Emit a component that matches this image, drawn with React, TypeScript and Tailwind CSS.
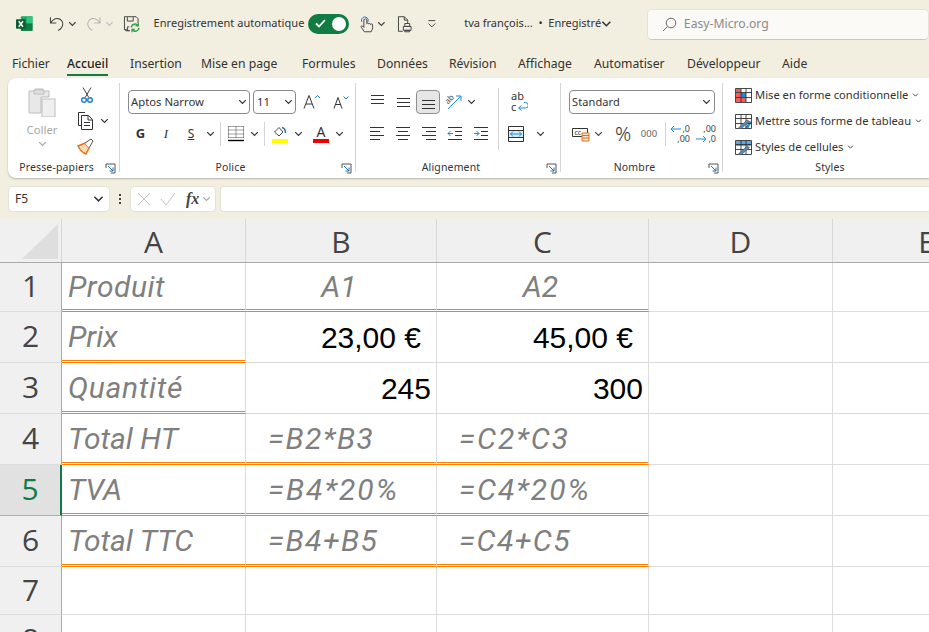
import type { ReactNode } from "react";

const ui = "font-['Noto_Sans',sans-serif]";

function Chev({ className = "" }: { className?: string }) {
  return (
    <svg width="9" height="6" viewBox="0 0 9 6" className={className} fill="none" stroke="currentColor" strokeWidth="1.2">
      <path d="M1.2 1.2 4.5 4.5 7.8 1.2" />
    </svg>
  );
}

function Launcher() {
  return (
    <svg width="11" height="11" viewBox="0 0 11 11" fill="none" stroke="#555" strokeWidth="1">
      <path d="M1 5V1h9v9H6" />
      <path d="M3 3l5 5M8 4.5V8H4.5" stroke="#1f6fb5" />
    </svg>
  );
}

function Lines({ ys, xs }: { ys: number[]; xs: [number, number][] }) {
  return (
    <svg width="16" height="16" viewBox="0 0 16 16" stroke="#333" strokeWidth="1" fill="none">
      {ys.map((y, i) => (
        <path key={y} d={`M${xs[i][0]} ${y + 0.5}H${xs[i][1]}`} />
      ))}
    </svg>
  );
}

function Indent({ dir }: { dir: "l" | "r" }) {
  return (
    <svg width="16" height="16" viewBox="0 0 16 16" fill="none" stroke="#333">
      <path d="M1 1.5h14M8 5.5h7M8 9.5h7M1 13.5h14" />
      <path d={dir === "l" ? "M6 7.5H1M3.5 5 1 7.5 3.5 10" : "M1 7.5h5M3.5 5 6 7.5 3.5 10"} stroke="#1f8ad6" />
    </svg>
  );
}

function Sep({ className }: { className: string }) {
  return <div className={`w-px bg-[#d5d5d5] ${className}`} />;
}

function Group({ label, className, launcher = true, children }: { label: string; className: string; launcher?: boolean; children: ReactNode }) {
  return (
    <div className={`flex h-[89px] shrink-0 flex-col ${className}`}>
      <div className="flex-1">{children}</div>
      <div className="-mb-[6px] grid h-[20px] grid-cols-[1fr_14px] items-center text-[10.5px] tracking-[0.15px] text-[#333]">
        <span className="whitespace-nowrap text-center">{label}</span>
        {launcher ? <Launcher /> : <span />}
      </div>
    </div>
  );
}

function TitleBar() {
  return (
    <div className="flex h-[47px] items-center text-[#333]">
      <svg width="17" height="17" viewBox="0 0 17 17" className="ml-[16px]">
        <rect x="5" y="1" width="12" height="15" rx="1" fill="#21a366" />
        <rect x="11" y="1" width="6" height="7.5" fill="#33c481" />
        <rect x="5" y="8.5" width="12" height="7.5" fill="#107c41" />
        <rect x="0" y="4" width="10" height="10" rx="1" fill="#0b5e33" />
        <path d="M2.8 6.2 7.2 11.8M7.2 6.2 2.8 11.8" stroke="#fff" strokeWidth="1.5" />
      </svg>
      <svg width="17" height="17" viewBox="0 0 17 17" fill="none" stroke="#444" strokeWidth="1.1" className="ml-[16px]">
        <path d="M1.5 2v6h6M1.8 7.8C4 4.5 6.5 3 9.5 3.5c3.5.6 5.5 4 4.5 7.2-.6 2-2.2 3.8-4.5 5" />
      </svg>
      <Chev className="ml-[3px] text-[#444]" />
      <svg width="17" height="17" viewBox="0 0 17 17" fill="none" stroke="#b5b5b5" strokeWidth="1.1" className="ml-[8px]">
        <path d="M15.5 2v6h-6M15.2 7.8C13 4.5 10.5 3 7.5 3.5 4 4.1 2 7.5 3 10.7c.6 2 2.2 3.8 4.5 5" />
      </svg>
      <Chev className="ml-[4px] text-[#c4c4c4]" />
      <svg width="18" height="18" viewBox="0 0 18 18" fill="none" className="ml-[9px]">
        <path d="M1.5 1.5h12l2 2v4.5M7 16H3l-1.5-1.5z M1.5 1.5V15" stroke="#444" />
        <path d="M4.5 2v4h6V2M4.5 16v-4h2" stroke="#444" />
        <path d="M8.5 12.5a4 4 0 0 1 7-2M16.5 13a4 4 0 0 1-7 2" stroke="#2a9d4a" strokeWidth="1.4" />
        <path d="M15.8 8v3h-3M9.2 17.5v-3h3" stroke="#2a9d4a" strokeWidth="1.2" />
      </svg>
      <span className="ml-[13px] w-[148px] whitespace-nowrap text-[11px] tracking-[0.05px]">Enregistrement automatique</span>
      <div className="ml-[6px] flex h-[20px] w-[42px] items-center justify-between rounded-full bg-[#107c41] pl-[7px] pr-[3px]">
        <svg width="11" height="9" viewBox="0 0 11 9" fill="none" stroke="#fff" strokeWidth="1.8">
          <path d="M1 4.5 4 7.5 10 1" />
        </svg>
        <span className="size-[14px] rounded-full bg-white" />
      </div>
      <svg width="16" height="18" viewBox="0 0 16 18" fill="none" className="ml-[10px]">
        <path d="M3 7a3.5 3.5 0 1 1 6 0" stroke="#1f7ad6" />
        <path d="M5 4.5v8L3.5 11c-1-.6-1.8.4-1.2 1.2L5.5 17h7c1-1.5 1.5-3 1.5-4.5V10c0-1.200-1.500-1.500-2-.5 0-1.200-1.500-1.500-2-.5 0-1-1.500-1.300-2-.3V4.500c0-1.200-2.500-1.200-2.500 0z" stroke="#444" />
      </svg>
      <Chev className="ml-[3px] text-[#444]" />
      <svg width="16" height="18" viewBox="0 0 16 18" fill="none" stroke="#444" className="ml-[11px]">
        <path d="M6 16.500H1.500v-15h6l3.500 3.500v3M7.500 1.500V5H11" />
        <path d="M8 8.500h5v3H8zM6.500 11.500h8v4h-8zM8 15.500h5V17H8z" />
      </svg>
      <svg width="10" height="10" viewBox="0 0 10 10" fill="none" stroke="#444" className="ml-[15px]">
        <path d="M1.500 1.500h7M1.500 4.500 5 8l3.500-3.500" />
      </svg>
      <span className="ml-[27px] w-[142px] whitespace-nowrap text-[11px]">tva françois... &nbsp;•&nbsp; Enregistré</span>
      <Chev className="scale-125 text-[#333]" />
      <div className="ml-[36px] mt-[9px] flex h-[31px] w-[290px] items-center self-start rounded-[5px] border border-[#e4e2da] border-b-[#c9c7bf] bg-[#fbfaf7] pl-[14px] text-[12.2px] text-[#8a8a8a]">
        <svg width="15" height="15" viewBox="0 0 15 15" fill="none" stroke="#666" className="mr-[7px]">
          <circle cx="9" cy="6" r="4.800" />
          <path d="M5.500 9.500 1 14" />
        </svg>
        Easy-Micro.org
      </div>
    </div>
  );
}

function Tabs() {
  return (
    <div className="flex h-[31px] items-start pt-[8px] text-[12.2px] text-[#333]">
      <span className="ml-[12px] w-[55px]">Fichier</span>
      <span className="flex w-[63px] flex-col items-start">
        <span className="border-b-[2px] border-[#107c41] pb-[1px] font-medium text-[#1f1f1f]">Accueil</span>
      </span>
      <span className="w-[71px]">Insertion</span>
      <span className="w-[101px]">Mise en page</span>
      <span className="w-[75px]">Formules</span>
      <span className="w-[72px]">Données</span>
      <span className="w-[69px]">Révision</span>
      <span className="w-[76px]">Affichage</span>
      <span className="w-[93px]">Automatiser</span>
      <span className="w-[95px]">Développeur</span>
      <span>Aide</span>
    </div>
  );
}

function Clipboard() {
  return (
    <Group label="Presse-papiers" className="w-[112px] border-r border-[#d5d5d5]">
      <div className="flex pt-[4px]">
        <div className="ml-[17px] flex w-[34px] flex-col items-center text-[#a8a8a8]">
          <svg width="28" height="30" viewBox="0 0 28 30" fill="none" stroke="#bdbdbd">
            <path d="M1 4h6V2h8v2h6v6H13v16H1z" fill="#e8e8e8" />
            <rect x="14" y="12" width="13" height="18" fill="#efefef" />
            <path d="M6 3h10v4H6z" fill="#e0e0e0" />
          </svg>
          <span className="mt-[4px] text-[11.3px] leading-[17px]">Coller</span>
          <Chev className="mt-[3px]" />
        </div>
        <div className="ml-[18px] flex flex-col">
          <svg width="16" height="17" viewBox="0 0 16 17" fill="none" className="ml-[2px]">
            <path d="M4 0.500 9.500 10M12 0.500 6.500 10" stroke="#444" />
            <circle cx="5" cy="13" r="2.300" stroke="#1f7ad6" strokeWidth="1.400" />
            <circle cx="11" cy="13" r="2.300" stroke="#1f7ad6" strokeWidth="1.400" />
          </svg>
          <div className="mt-[8px] flex h-[18px] items-center">
            <svg width="18" height="18" viewBox="0 0 18 18" fill="none" stroke="#333">
              <path d="M5 13.500H1.500v-13H8" />
              <path d="M4.500 3.500h7l4 4v10h-11zM11 3.500V8h4.500M7 10.500h6M7 13.500h6" />
            </svg>
            <Chev className="ml-[5px] text-[#333]" />
          </div>
          <svg width="18" height="17" viewBox="0 0 18 17" className="mt-[8px]" fill="none">
            <path d="M1 8l7-3 4 5-3 6C6 15 3 12 1 8z" fill="#f8d9b8" stroke="#e0701a" strokeWidth="1.400" />
            <path d="M8 5l6-4 2 2-4 7" fill="#fff" stroke="#555" />
          </svg>
        </div>
      </div>
    </Group>
  );
}

function Font() {
  return (
    <Group label="Police" className="w-[236px] border-r border-[#d5d5d5]">
      <div className="flex items-center gap-[3px] pl-[8px] pt-[7px]">
        <div className="flex h-[24px] w-[122px] items-center justify-between rounded-[4px] border border-[#8a8a8a] pl-[2px] pr-[2px] text-[11.3px] text-[#333]">
          Aptos Narrow
          <Chev />
        </div>
        <div className="flex h-[24px] w-[43px] items-center justify-between rounded-[4px] border border-[#8a8a8a] pl-[3px] pr-[2px] text-[11.3px] text-[#333]">
          11
          <Chev />
        </div>
        <svg width="18" height="16" viewBox="0 0 18 16" fill="none" stroke="#333" className="ml-[4px]">
          <path d="M1 14.500 6 1.500l5 13M3 10h6" />
          <path d="M12 4l2.500-2.500L17 4" stroke="#1f7ad6" />
        </svg>
        <svg width="16" height="14" viewBox="0 0 16 14" fill="none" stroke="#333" className="ml-[9px]">
          <path d="M1 13.500 5 2.500l4 11M2.500 9.500h5" />
          <path d="M10.500 1.500 13 4l2.500-2.500" stroke="#1f7ad6" />
        </svg>
      </div>
      <div className="mt-[9px] flex h-[22px] items-center pl-[8px] text-[#333]">
        <span className="w-[25px] text-center text-[13px] font-bold">G</span>
        <span className="w-[26px] text-center font-['Liberation_Serif',serif] text-[13px] italic">I</span>
        <span className="w-[24px] text-center text-[12px] underline">S</span>
        <span className="flex w-[14px] justify-center"><Chev /></span>
        <Sep className="ml-[3px] mr-[3px] h-[24px]" />
        <span className="flex w-[23px] justify-center">
          <svg width="16" height="16" viewBox="0 0 16 16" fill="none" stroke="#444">
            <path d="M.500.500h15M.500 4h15M.500 8h15M.500 11.500h15M.500.500v12M8 .500v12M15.500.500v12" strokeDasharray="1 1" />
            <path d="M0 14.500h16" stroke="#000" strokeWidth="1.400" />
          </svg>
        </span>
        <span className="flex w-[14px] justify-center"><Chev /></span>
        <Sep className="ml-[3px] mr-[3px] h-[24px]" />
        <span className="flex w-[24px] flex-col items-center">
          <svg width="14" height="12" viewBox="0 0 14 12" fill="none" stroke="#444">
            <path d="M1.500 6 6 1.500 10 6l-4 4z" />
            <path d="M9 1.500c2 .5 3.500 2.500 3.500 5.500" stroke="#1f6fb5" strokeWidth="1.400" />
          </svg>
          <span className="mt-px h-[4px] w-[16px] bg-[#ffff00]" />
        </span>
        <span className="flex w-[12px] justify-center"><Chev /></span>
        <span className="ml-[5px] flex w-[24px] flex-col items-center">
          <span className="text-[14px] leading-[14px]">A</span>
          <span className="h-[4px] w-[16px] bg-[#ee0000]" />
        </span>
        <span className="flex w-[12px] justify-center"><Chev /></span>
      </div>
    </Group>
  );
}

function Alignment() {
  const top: [number, number][] = [[2, 15], [2, 15], [2, 15]];
  return (
    <Group label="Alignement" className="w-[205px] border-r border-[#d5d5d5]">
      <div className="flex">
        <div className="w-[142px] pl-[8px] pt-[7px]">
          <div className="flex h-[24px] items-center">
            <span className="flex w-[26px] justify-center"><Lines ys={[1, 5, 9]} xs={top} /></span>
            <span className="flex w-[26px] justify-center"><Lines ys={[4, 8, 12]} xs={top} /></span>
            <span className="flex h-[24px] w-[24px] items-center justify-center rounded-[4px] border border-[#8f8f8f] bg-[#e6e6e6]"><Lines ys={[6, 10, 14]} xs={top} /></span>
            <span className="ml-[1px] flex w-[26px] justify-center">
              <svg width="18" height="18" viewBox="0 0 18 18" fill="none">
                <path d="M3 16 16 3M11 3h5v5" stroke="#1f8ad6" />
                <text x="1" y="9" fontSize="8" fill="#444" transform="rotate(-45 5 8)">ab</text>
              </svg>
            </span>
            <Chev className="text-[#333]" />
          </div>
          <div className="mt-[9px] flex h-[22px] items-center">
            <span className="flex w-[26px] justify-center"><Lines ys={[1, 5, 9, 13]} xs={[[1, 15], [1, 11], [1, 15], [1, 11]]} /></span>
            <span className="flex w-[26px] justify-center"><Lines ys={[1, 5, 9, 13]} xs={[[1, 15], [3, 13], [1, 15], [3, 13]]} /></span>
            <span className="flex w-[26px] justify-center"><Lines ys={[1, 5, 9, 13]} xs={[[1, 15], [5, 15], [1, 15], [5, 15]]} /></span>
            <span className="flex w-[26px] justify-center"><Indent dir="l" /></span>
            <span className="flex w-[26px] justify-center"><Indent dir="r" /></span>
          </div>
        </div>
        <Sep className="mt-[5px] h-[62px]" />
        <div className="flex w-[61px] flex-col pl-[9px] pt-[7px]">
          <div className="flex h-[24px] w-[24px] flex-col items-start text-[11px] leading-[11px] text-[#333]">
            <span className="pl-[3px]">ab</span>
            <span className="flex items-center pl-[3px]">c
              <svg width="11" height="9" viewBox="0 0 11 9" fill="none" stroke="#1f8ad6" className="ml-[1px]">
                <path d="M7 .500h1.500a2.500 2.500 0 0 1 0 5.500H2M4.500 3.500 1.500 6l3 2.500" />
              </svg>
            </span>
          </div>
          <div className="mt-[9px] flex h-[22px] items-center">
            <svg width="16" height="16" viewBox="0 0 16 16" fill="none" stroke="#333">
              <path d="M.500.500h15v15H.500zM.500 4.500h15M.500 11.500h15" />
              <rect x="1" y="5" width="14" height="6" fill="#d8ecfa" stroke="none" />
              <path d="M2.500 8h11M5 5.500 2.500 8 5 10.500M11 5.500 13.500 8 11 10.500" stroke="#1f8ad6" />
            </svg>
            <Chev className="ml-[12px] text-[#333]" />
          </div>
        </div>
      </div>
    </Group>
  );
}

function NumberGroup() {
  return (
    <Group label="Nombre" className="w-[162px] border-r border-[#d5d5d5]">
      <div className="pl-[8px] pt-[7px]">
        <div className="flex h-[24px] w-[146px] items-center justify-between rounded-[4px] border border-[#8a8a8a] pl-[2px] pr-[3px] text-[11px] tracking-[0.1px] text-[#333]">
          Standard
          <Chev />
        </div>
        <div className="mt-[9px] flex h-[22px] items-center text-[#444]">
          <svg width="20" height="16" viewBox="0 0 20 16" fill="none" className="ml-[3px]">
            <path d="M.500 2.500h15v8H.500z" stroke="#333" />
            <text x="2.500" y="9" fontSize="7" fill="#333">cc</text>
            <path d="M10 7h7v8h-7z" fill="#fbe3cf" stroke="#e0701a" />
            <path d="M10 9.500h7M10 12h7" stroke="#e0701a" />
          </svg>
          <Chev className="ml-[2px]" />
          <span className="ml-[10px] w-[20px] text-center text-[20px] font-light leading-[20px] text-[#333]">%</span>
          <span className="ml-[4px] w-[24px] text-center text-[9.500px] text-[#666]">000</span>
          <Sep className="ml-[4px] h-[24px]" />
          <span className="ml-[6px] flex w-[18px] flex-col items-end text-[9px] leading-[10px]">
            <span className="flex items-center">
              <svg width="11" height="8" viewBox="0 0 11 8" fill="none" stroke="#1f8ad6" className="mr-px"><path d="M11 4H1M4 1 1 4l3 3" /></svg>
              ,0
            </span>
            <span>,00</span>
          </span>
          <span className="ml-[8px] flex w-[18px] flex-col items-end text-[9px] leading-[10px]">
            <span>,00</span>
            <span className="flex items-center">
              <svg width="11" height="8" viewBox="0 0 11 8" fill="none" stroke="#1f8ad6" className="mr-px"><path d="M0 4h10M7 1l3 3-3 3" /></svg>
              ,0
            </span>
          </span>
        </div>
      </div>
    </Group>
  );
}

function StyleIcon({ kind }: { kind: "cond" | "table" | "cell" }) {
  return (
    <svg width="17" height="15" viewBox="0 0 17 15" fill="none" className="shrink-0">
      {kind === "cond" && (
        <>
          <rect x="1" y="1" width="5" height="3" fill="#f25c5c" />
          <rect x="6" y="5" width="5" height="4" fill="#1f8ad6" />
          <rect x="1" y="5" width="5" height="9" fill="#f25c5c" />
          <rect x="6" y="10" width="5" height="4" fill="#f25c5c" />
        </>
      )}
      {kind === "table" && <path d="M10 14l5-7 1.500 1-3 6z" fill="#1f8ad6" />}
      {kind === "cell" && <rect x="1" y="1" width="15" height="5" fill="#5aa9e6" />}
      <path d="M.500.500h16v14H.500zM.500 4.500h16M.500 9.500h16M6 .500v14M11 .500v14" stroke="#333" strokeWidth="0.900" />
      {kind !== "cond" && <path d="M3 14.500 12 6l2.500 1.500-8 7z" fill="#4d90c4" stroke="#555" strokeWidth="0.700" />}
    </svg>
  );
}

function Styles() {
  const items: { label: string; kind: "cond" | "table" | "cell" }[] = [
    { label: "Mise en forme conditionnelle", kind: "cond" },
    { label: "Mettre sous forme de tableau", kind: "table" },
    { label: "Styles de cellules", kind: "cell" },
  ];
  return (
    <Group label="Styles" className="w-[228px]" launcher={false}>
      <div className="flex flex-col gap-[6px] pl-[12px] pt-[2px]">
        {items.map((s) => (
          <div key={s.label} className="flex h-[20px] items-center gap-[3px] whitespace-nowrap text-[11.2px] text-[#333]">
            <StyleIcon kind={s.kind} />
            <span>{s.label}</span>
            <Chev className="scale-75" />
          </div>
        ))}
      </div>
    </Group>
  );
}

function FormulaBar() {
  return (
    <div className="mt-[8px] flex h-[26px] items-stretch pl-[8px] text-[#333]">
      <div className="flex w-[102px] items-center justify-between rounded-[4px] border border-[#e3e1d8] bg-white pl-[6px] pr-[6px] text-[12px]">
        F5
        <Chev className="scale-125" />
      </div>
      <div className="flex w-[20px] flex-col items-center justify-center gap-[2px]">
        <span className="size-[2px] bg-[#444]" />
        <span className="size-[2px] bg-[#444]" />
        <span className="size-[2px] bg-[#444]" />
      </div>
      <div className="flex w-[86px] items-center rounded-[4px] border border-[#e3e1d8] bg-white pl-[6px] text-[#c4c4c4]">
        <svg width="14" height="14" viewBox="0 0 14 14" fill="none" stroke="currentColor"><path d="M1 1l12 12M13 1 1 13" /></svg>
        <svg width="16" height="14" viewBox="0 0 16 14" fill="none" stroke="currentColor" className="ml-[9px]"><path d="M1 7l5 6L15 1" /></svg>
        <span className="ml-[10px] font-['Liberation_Serif',serif] text-[16px] font-bold italic leading-none text-[#444]">fx</span>
        <Chev className="ml-[3px] text-[#aaa]" />
      </div>
      <div className="ml-[4px] flex-1 rounded-l-[4px] border border-r-0 border-[#e3e1d8] bg-white" />
    </div>
  );
}

type Cell = { text?: string; cls?: string; orange?: boolean };

const label = "pl-[6px] font-['Roboto',sans-serif] italic text-[#7f7f7f]";
const formula = "pl-[22px] font-['Roboto',sans-serif] italic tracking-[1.5px] text-[#7f7f7f]";
const formulaWide = "pl-[22px] font-['Roboto',sans-serif] italic tracking-[2px] text-[#7f7f7f]";
const center = "justify-center pr-[4px] font-['Roboto',sans-serif] italic text-[#7f7f7f]";
const num = "justify-end pr-[5px] font-['Liberation_Sans',sans-serif] text-black";
const money = "justify-end pr-[15px] font-['Liberation_Sans',sans-serif] text-black";

const sheet: { n: string; h: string; active?: boolean; cells: Cell[] }[] = [
  {
    n: "1",
    h: "h-[49px]",
    cells: [
      { text: "Produit", cls: `${label} tracking-[0.5px]`, orange: true },
      { text: "A1", cls: center, orange: true },
      { text: "A2", cls: center, orange: true },
      {},
      {},
    ],
  },
  {
    n: "2",
    h: "h-[51px]",
    cells: [
      { text: "Prix", cls: label, orange: true },
      { text: "23,00 €", cls: money },
      { text: "45,00 €", cls: money },
      {},
      {},
    ],
  },
  {
    n: "3",
    h: "h-[51px]",
    cells: [
      { text: "Quantité", cls: `${label} tracking-[0.7px]`, orange: true },
      { text: "245", cls: num },
      { text: "300", cls: num },
      {},
      {},
    ],
  },
  {
    n: "4",
    h: "h-[51px]",
    cells: [
      { text: "Total HT", cls: label, orange: true },
      { text: "=B2*B3", cls: formula, orange: true },
      { text: "=C2*C3", cls: formulaWide, orange: true },
      {},
      {},
    ],
  },
  {
    n: "5",
    h: "h-[51px]",
    active: true,
    cells: [
      { text: "TVA", cls: label, orange: true },
      { text: "=B4*20%", cls: formulaWide, orange: true },
      { text: "=C4*20%", cls: formulaWide, orange: true },
      {},
      {},
    ],
  },
  {
    n: "6",
    h: "h-[51px]",
    cells: [
      { text: "Total TTC", cls: label, orange: true },
      { text: "=B4+B5", cls: formula, orange: true },
      { text: "=C4+C5", cls: formula, orange: true },
      {},
      {},
    ],
  },
  { n: "7", h: "h-[48px]", cells: [{}, {}, {}, {}, {}] },
  { n: "8", h: "h-[51px]", cells: [{}, {}, {}, {}, {}] },
];

const widths = ["w-[184px]", "w-[191px]", "w-[212px]", "w-[184px]", "w-[188px]"];
const heads = ["A", "B", "C", "D", "E"];
const headFont = "font-['Open_Sans',sans-serif] text-[30px] text-[#444]";

function Grid() {
  return (
    <div className="mt-[7px] bg-[#f0f0f0]">
      <div className="flex h-[44px] border-b border-[#a9a9a9]">
        <div className="flex w-[62px] shrink-0 justify-end border-r border-[#d8d8d8] pb-[3px] pr-[3px] pt-[5px]">
          <svg width="36" height="35" viewBox="0 0 36 35"><path d="M36 0v35H0z" fill="#dedede" /></svg>
        </div>
        {heads.map((h, i) => (
          <div key={h} className={`flex shrink-0 items-center justify-center border-r border-[#d8d8d8] pb-px pt-[2px] ${widths[i]} ${headFont}`}>
            {h}
          </div>
        ))}
      </div>
      {sheet.map((r) => (
        <div key={r.n} className={`flex ${r.h}`}>
          <div
            className={
              r.active
                ? `flex w-[62px] shrink-0 items-center justify-center border-b border-r-2 border-b-[#b0b0b0] border-r-[#107c41] bg-[#e1e1e1] pb-[3px] ${headFont} !text-[#107c41]`
                : `flex w-[62px] shrink-0 items-center justify-center border-b border-r border-b-[#dcdcdc] border-r-[#a9a9a9] pb-[3px] ${headFont}`
            }
          >
            {r.n}
          </div>
          {r.cells.map((c, i) => (
            <div
              key={i}
              className={`flex shrink-0 items-center whitespace-nowrap bg-white text-[30px] ${widths[i]} ${c.cls ?? ""} border-r border-r-[#dcdcdc] ${
                c.orange ? "border-b-[3px] border-b-[#ff8000] [border-bottom-style:double]" : "border-b border-b-[#dcdcdc]"
              }`}
            >
              {c.text}
            </div>
          ))}
        </div>
      ))}
    </div>
  );
}

export default function App() {
  return (
    <div className={`h-[632px] w-[929px] overflow-hidden bg-[#f2eee0] ${ui}`}>
      <TitleBar />
      <Tabs />
      <div className="ml-[8px] flex h-[100px] w-[921px] rounded-l-[8px] bg-white pt-[5px] shadow-[0_1px_2px_rgba(0,0,0,0.25)]">
        <Clipboard />
        <Font />
        <Alignment />
        <NumberGroup />
        <Styles />
      </div>
      <FormulaBar />
      <Grid />
    </div>
  );
}
